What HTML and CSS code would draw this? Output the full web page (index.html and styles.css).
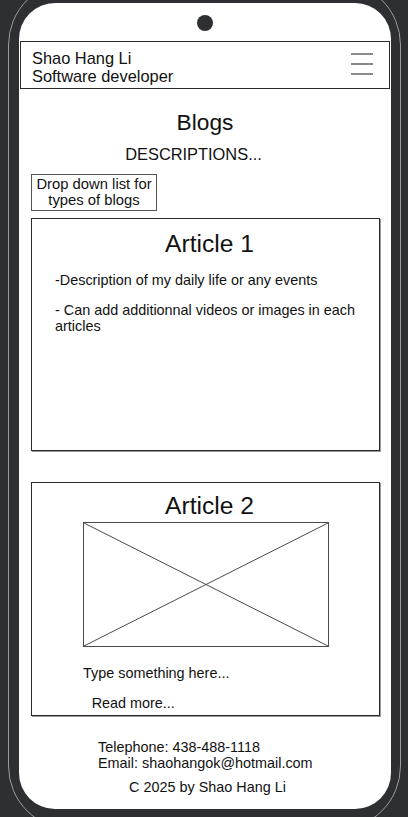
FILE: index.html
```html
<!DOCTYPE html>
<html>
<head>
    <title>Blogs</title>
    <link rel="stylesheet" href="styles.css">
</head>
<body>
<div class="phone">
  <div class="screen">
    <div class="camera"></div>

    <header class="top-bar">
      <div class="brand">
        <div>Shao Hang Li</div>
        <div>Software developer</div>
      </div>
      <div class="burger">
        <span></span>
        <span></span>
        <span></span>
      </div>
    </header>

    <h1 class="page-title">Blogs</h1>
    <p class="page-desc">DESCRIPTIONS...</p>

    <div class="dropdown">
      <div class="dropdown-line">Drop down list for</div>
      <div class="dropdown-line">types of blogs</div>
    </div>

    <article class="article article-one">
      <h2 class="article-title">Article 1</h2>
      <p class="article-text">-Description of my daily life or any events</p>
      <p class="article-text">- Can add additionnal videos or images in each articles</p>
    </article>

    <article class="article article-two">
      <h2 class="article-title">Article 2</h2>
      <svg class="placeholder" width="246" height="125" viewBox="0 0 246 125">
        <rect x="0.5" y="0.5" width="245" height="124" fill="none" stroke="#4a4a4a"/>
        <line x1="1" y1="1" x2="245" y2="124" stroke="#4a4a4a"/>
        <line x1="1" y1="124" x2="245" y2="1" stroke="#4a4a4a"/>
      </svg>
      <p class="teaser">Type something here...</p>
      <p class="read-more">Read more...</p>
    </article>

    <footer class="footer">
      <div class="contact">
        <div>Telephone: 438-488-1118</div>
        <div>Email: shaohangok@hotmail.com</div>
      </div>
      <div class="copyright">C 2025 by Shao Hang Li</div>
    </footer>
  </div>
</div>
</body>
</html>
```

FILE: styles.css
```css
html, body {
  margin: 0;
  height: 100%;
  overflow: hidden;
}
body {
  background: #2e2f33;
  font-family: "Liberation Sans", Arial, sans-serif;
  color: #111;
}

/* phone frame */
.phone {
  box-sizing: border-box;
  width: 393px;
  height: 849px;
  margin: -19px 0 0 8px;
  padding: 21px 9px 0 10px;
  border: 1px solid #9c9c9e;
  border-radius: 64px;
}
.screen {
  height: 806px;
  background: #fff;
  border-radius: 36px;
  overflow: hidden;
}
.camera {
  width: 16px;
  height: 16px;
  margin: 12px auto 0;
  border-radius: 50%;
  background: #2e2f33;
}

/* header */
.top-bar {
  display: flex;
  justify-content: space-between;
  align-items: flex-start;
  margin: 10px 1px 0;
  padding: 7px 11px 3px;
  border: 1px solid #2a2a2a;
  font-size: 16.4px;
  line-height: 18px;
}
.burger {
  display: flex;
  flex-direction: column;
  gap: 8px;
  width: 22px;
  margin: 4px 5px 0 0;
}
.burger span {
  display: block;
  height: 2px;
  background: #8a8a8a;
}

.page-title {
  margin: 20px 0 0;
  font-size: 22.7px;
  line-height: 26px;
  font-weight: normal;
  text-align: center;
}
.page-desc {
  margin: 10px 0 0;
  padding-right: 23px;
  font-size: 16.4px;
  line-height: 18px;
  text-align: center;
}

.dropdown {
  box-sizing: border-box;
  width: 126px;
  height: 37px;
  margin: 11px 0 0 12px;
  padding-top: 1px;
  border: 1px solid #555;
  font-size: 14.8px;
  line-height: 17px;
  text-align: center;
}
.dropdown-line + .dropdown-line {
  margin-top: -1px;
}

/* articles */
.article {
  box-sizing: border-box;
  margin: 0 11px 0 12px;
  border: 1px solid #2a2a2a;
  box-shadow: 1px 1px 0 #9a9a9a;
}
.article-one {
  height: 233px;
  margin-top: 7px;
  padding: 11.4px 12px 0 23px;
}
.article-two {
  height: 234px;
  margin-top: 31px;
  padding: 9.4px 0 0;
}
.article-title {
  margin: 0;
  padding-left: 8px;
  font-size: 24.6px;
  line-height: 28px;
  font-weight: normal;
  text-align: center;
}
.article-one .article-title {
  margin-left: -23px;
  margin-right: -12px;
}
.article-text {
  margin: 14px 0 0;
  font-size: 14.4px;
  line-height: 16px;
}
.placeholder {
  display: block;
  margin: 2px auto 0;
}
.teaser, .read-more {
  font-size: 14.4px;
  line-height: 16px;
}
.teaser {
  margin: 17.7px 0 0 51px;
}
.read-more {
  margin: 14.4px 0 0 59.7px;
}

/* footer */
.footer {
  margin-top: 23.4px;
  font-size: 14.4px;
  line-height: 16px;
}
.contact {
  padding-left: 79px;
}
.copyright {
  margin-top: 8px;
  padding-left: 5px;
  text-align: center;
}
```
